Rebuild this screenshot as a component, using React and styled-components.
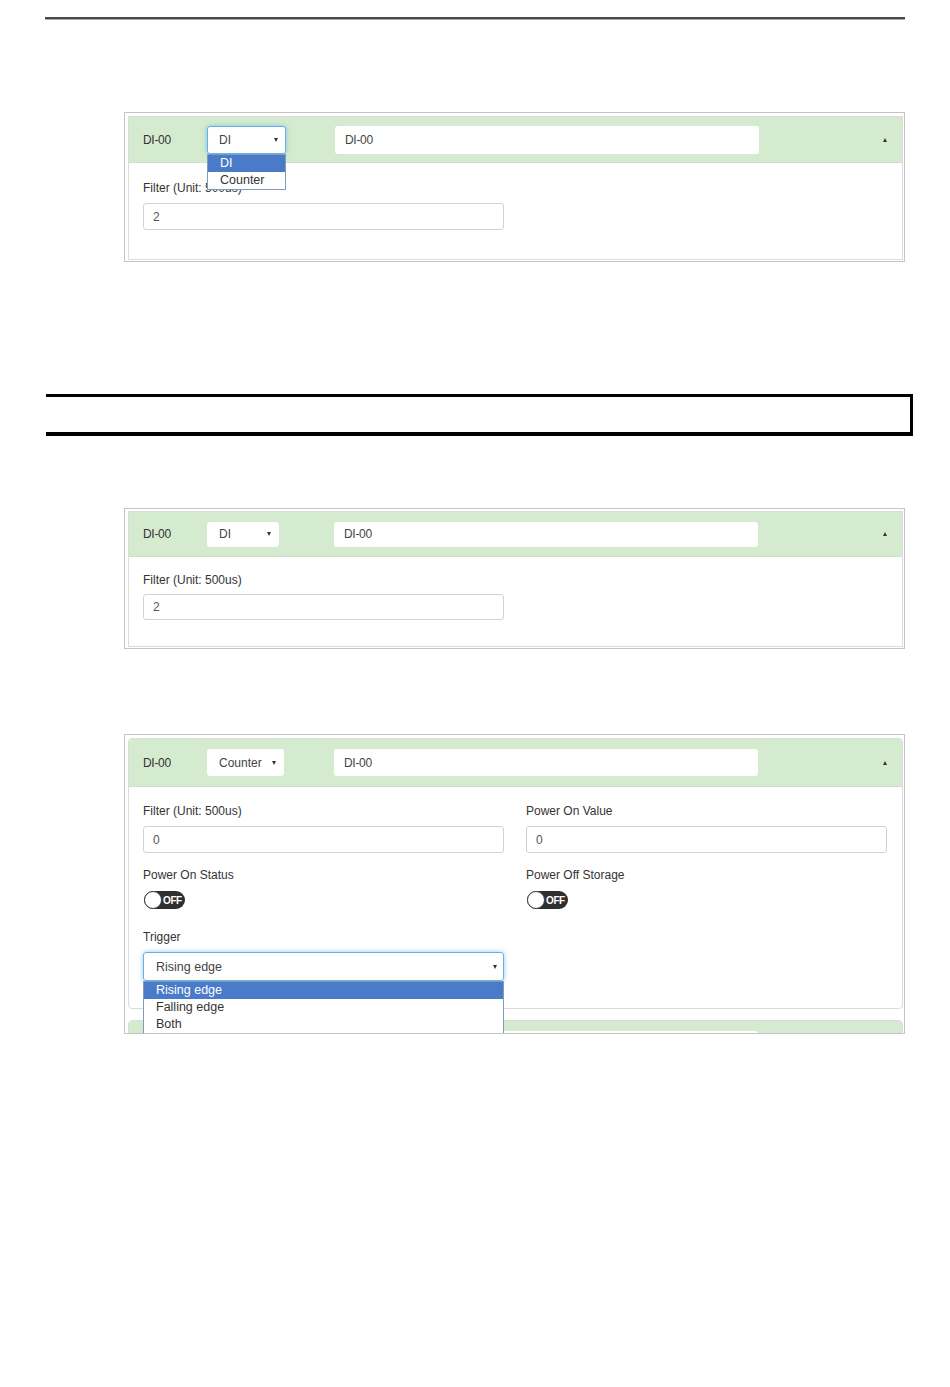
import React from "react";
import styled, { createGlobalStyle } from "styled-components";

const GlobalStyle = createGlobalStyle`
  html, body {
    margin: 0;
    padding: 0;
    background: #fff;
  }
  body {
    font-family: "Liberation Sans", Arial, sans-serif;
    font-size: 12px;
    color: #333;
  }
  * {
    box-sizing: border-box;
  }
`;

const Page = styled.div`
  width: 950px;
  min-height: 1387px;
  display: flex;
  flex-direction: column;
`;

const TopRule = styled.div`
  margin: 17px 0 0 45px;
  width: 860px;
  height: 3px;
  background: #4a4a4a;
  border-bottom: 1px solid #a8a8a8;
`;

const Figure = styled.div`
  margin: ${(p) => p.top}px 0 0 124px;
  width: 781px;
  height: ${(p) => p.height}px;
  border: 1px solid #c4c4c4;
  padding: ${(p) => p.inset}px 1px 0 3px;
  overflow: hidden;
  display: flex;
  flex-direction: column;
  gap: 11px;
`;

const Panel = styled.div`
  border: 1px solid #dcdcdc;
  border-radius: ${(p) => (p.rounded ? "4px" : "0")};
  background: #fff;
  flex-shrink: 0;
`;

const Header = styled.div`
  height: ${(p) => p.h}px;
  background: #d4ebcf;
  border-bottom: 1px solid #cfe0ca;
  border-radius: ${(p) => (p.rounded ? "3px 3px 0 0" : "0")};
  display: flex;
  align-items: center;
  padding: 0 15px 0 14px;
`;

const Name = styled.span`
  width: 64px;
  color: #333;
  letter-spacing: -0.3px;
`;

const SelectWrap = styled.div`
  position: relative;
  width: ${(p) => p.w}px;
  margin-right: ${(p) => p.gap}px;
`;

const SelectBox = styled.div`
  height: ${(p) => p.h}px;
  background: #fff;
  border: 1px solid ${(p) => (p.focused ? "#66afe9" : "#fff")};
  border-radius: 3px;
  box-shadow: ${(p) =>
    p.focused ? "0 0 5px rgba(102,175,233,0.7)" : "none"};
  display: flex;
  align-items: center;
  justify-content: space-between;
  padding: 0 7px 0 11px;
  color: #444;
  font-size: 12px;
`;

const DownArrow = styled.span`
  width: 0;
  height: 0;
  border-left: 2.5px solid transparent;
  border-right: 2.5px solid transparent;
  border-top: 4px solid #333;
`;

const UpArrow = styled.span`
  width: 0;
  height: 0;
  border-left: 2.5px solid transparent;
  border-right: 2.5px solid transparent;
  border-bottom: 4px solid #333;
`;

const OptionList = styled.div`
  position: absolute;
  left: 0;
  right: 0;
  top: 100%;
  background: #fff;
  border: 1px solid #7f9db9;
  z-index: 5;
`;

const Option = styled.div`
  height: 17px;
  line-height: 17px;
  padding-left: 12px;
  font-size: 12.5px;
  background: ${(p) => (p.active ? "#4a7bc8" : "#fff")};
  color: ${(p) => (p.active ? "#fff" : "#333")};
`;

const NameInput = styled.div`
  width: 424px;
  height: ${(p) => p.h}px;
  background: #fff;
  border-radius: 3px;
  display: flex;
  align-items: center;
  padding-left: 10px;
  color: #444;
  letter-spacing: -0.3px;
`;

const Spacer = styled.div`
  flex: 1;
`;

const Body = styled.div`
  padding: ${(p) => p.top}px 15px 0 14px;
  min-height: ${(p) => p.minH}px;
  display: grid;
  grid-template-columns: ${(p) => (p.cols === 2 ? "361px 361px" : "361px")};
  column-gap: 22px;
  align-content: start;
`;

const Field = styled.div`
  display: flex;
  flex-direction: column;
  gap: ${(p) => p.gap}px;
  margin-bottom: ${(p) => p.mb}px;
  position: relative;
`;

const Label = styled.label`
  line-height: 17px;
  color: #333;
`;

const TextInput = styled.div`
  height: ${(p) => p.h}px;
  border: 1px solid #d2d2d2;
  border-radius: 3px;
  display: flex;
  align-items: center;
  padding-left: 9px;
  color: #555;
`;

const Toggle = styled.div`
  width: 41px;
  height: 18px;
  border-radius: 9px;
  background: #2f2f2f;
  display: flex;
  align-items: center;
  padding-left: 1px;
  gap: 1px;
  margin-left: 1px;
`;

const Knob = styled.span`
  width: 18px;
  height: 18px;
  border-radius: 50%;
  background: #fff;
  border: 1px solid #444;
  margin-left: -1px;
`;

const ToggleText = styled.span`
  color: #fff;
  font-weight: bold;
  font-size: 10px;
  letter-spacing: -0.4px;
`;

const TriggerSelect = styled.div`
  height: 29px;
  border: 1px solid #66afe9;
  border-radius: 3px;
  box-shadow: 0 0 5px rgba(102, 175, 233, 0.7);
  display: flex;
  align-items: center;
  justify-content: space-between;
  padding: 0 6px 0 12px;
  color: #444;
  font-size: 12.5px;
`;

const TriggerList = styled(OptionList)`
  top: auto;
  bottom: -54px;
  height: 54px;
`;

const BlackBar = styled.div`
  margin: 132px 0 0 46px;
  width: 867px;
  height: 42px;
  border-top: 3px solid #000;
  border-bottom: 4px solid #000;
  border-right: 3px solid #000;
`;

const HeaderRow = ({ h, rounded, selectW, selectH, gap, value, focused, open, blank }) => (
  <Header h={h} rounded={rounded}>
    <Name>{blank ? "" : "DI-00"}</Name>
    <SelectWrap w={selectW} gap={gap}>
      <SelectBox h={selectH} focused={focused}>
        {value}
        <DownArrow />
      </SelectBox>
      {open && (
        <OptionList>
          <Option active>DI</Option>
          <Option>Counter</Option>
        </OptionList>
      )}
    </SelectWrap>
    <NameInput h={selectH}>{blank ? "" : "DI-00"}</NameInput>
    <Spacer />
    <UpArrow />
  </Header>
);

const App = () => (
  <Page>
    <GlobalStyle />
    <TopRule />

    <Figure top={92} height={150} inset={3}>
      <Panel>
        <HeaderRow h={46} selectW={79} selectH={28} gap={49} value="DI" focused open />
        <Body top={17} minH={96}>
          <Field gap={6} mb={15}>
            <Label>Filter (Unit: 500us)</Label>
            <TextInput h={27}>2</TextInput>
          </Field>
        </Body>
      </Panel>
    </Figure>

    <BlackBar />

    <Figure top={72} height={141} inset={2}>
      <Panel>
        <HeaderRow h={45} selectW={72} selectH={25} gap={55} value="DI" />
        <Body top={15} minH={89}>
          <Field gap={5} mb={15}>
            <Label>Filter (Unit: 500us)</Label>
            <TextInput h={26}>2</TextInput>
          </Field>
        </Body>
      </Panel>
    </Figure>

    <Figure top={85} height={300} inset={3}>
      <Panel rounded>
        <HeaderRow h={48} rounded selectW={77} selectH={27} gap={50} value="Counter" />
        <Body top={16} minH={221} cols={2}>
          <Field gap={6} mb={14}>
            <Label>Filter (Unit: 500us)</Label>
            <TextInput h={27}>0</TextInput>
          </Field>
          <Field gap={6} mb={14}>
            <Label>Power On Value</Label>
            <TextInput h={27}>0</TextInput>
          </Field>
          <Field gap={7} mb={20}>
            <Label>Power On Status</Label>
            <Toggle>
              <Knob />
              <ToggleText>OFF</ToggleText>
            </Toggle>
          </Field>
          <Field gap={7} mb={20}>
            <Label>Power Off Storage</Label>
            <Toggle>
              <Knob />
              <ToggleText>OFF</ToggleText>
            </Toggle>
          </Field>
          <Field gap={6} mb={15}>
            <Label>Trigger</Label>
            <TriggerSelect>
              Rising edge
              <DownArrow />
            </TriggerSelect>
            <TriggerList>
              <Option active>Rising edge</Option>
              <Option>Falling edge</Option>
              <Option>Both</Option>
            </TriggerList>
          </Field>
        </Body>
      </Panel>
      <Panel rounded>
        <HeaderRow h={48} rounded selectW={77} selectH={27} gap={50} value="" blank />
      </Panel>
    </Figure>
  </Page>
);

export default App;
